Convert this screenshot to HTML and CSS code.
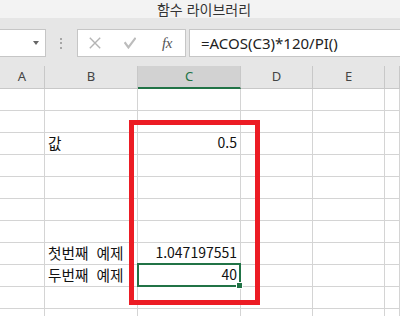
FILE: index.html
```html
<!DOCTYPE html>
<html lang="ko">
<head>
<meta charset="utf-8">
<title>함수 라이브러리</title>
<link rel="stylesheet" href="styles.css">
</head>
<body>
<div class="app">
  <div class="title">함수 라이브러리</div>
  <div class="fbar">
    <div class="namebox"><span class="caret"></span></div>
    <div class="grip"><i></i><i></i><i></i></div>
    <div class="fbtns">
      <svg class="ico-x" width="12" height="12" viewBox="0 0 12 12"><path d="M0.8 0.8 L11.2 11.2 M11.2 0.8 L0.8 11.2" stroke="#b4b4b4" stroke-width="1.4" fill="none"/></svg>
      <svg class="ico-ok" width="12" height="12" viewBox="0 0 12 12"><path d="M0.6 5.2 L4.4 10.4 L11.6 0.8" stroke="#bcbcbc" stroke-width="2.2" fill="none" stroke-linejoin="miter"/></svg>
      <span class="fx">fx</span>
    </div>
    <div class="formula">=ACOS(C3)*120/PI()</div>
  </div>
  <div class="sheet">
    <div class="hd">A</div><div class="hd">B</div><div class="hd hd-sel">C</div><div class="hd">D</div><div class="hd">E</div><div class="hd"></div>

    <div class="c"></div><div class="c"></div><div class="c"></div><div class="c"></div><div class="c"></div><div class="c"></div>
    <div class="c"></div><div class="c"></div><div class="c"></div><div class="c"></div><div class="c"></div><div class="c"></div>
    <div class="c"></div><div class="c txt">값</div><div class="c num">0.5</div><div class="c"></div><div class="c"></div><div class="c"></div>
    <div class="c"></div><div class="c"></div><div class="c"></div><div class="c"></div><div class="c"></div><div class="c"></div>
    <div class="c"></div><div class="c"></div><div class="c"></div><div class="c"></div><div class="c"></div><div class="c"></div>
    <div class="c"></div><div class="c"></div><div class="c"></div><div class="c"></div><div class="c"></div><div class="c"></div>
    <div class="c"></div><div class="c"></div><div class="c"></div><div class="c"></div><div class="c"></div><div class="c"></div>
    <div class="c"></div><div class="c txt">첫번째 예제</div><div class="c num">1.047197551</div><div class="c"></div><div class="c"></div><div class="c"></div>
    <div class="c"></div><div class="c txt">두번째 예제</div><div class="c num active">40<span class="sel"><span class="handle"></span></span></div><div class="c"></div><div class="c"></div><div class="c"></div>
    <div class="c"></div><div class="c"></div><div class="c"></div><div class="c"></div><div class="c"></div><div class="c"></div>
    <div class="c"></div><div class="c"></div><div class="c"></div><div class="c"></div><div class="c"></div><div class="c"></div>
  </div>
  <div class="annot"></div>
</div>
</body>
</html>
```
FILE: styles.css
```css
html, body {
  margin: 0;
  padding: 0;
}
body {
  width: 400px;
  height: 316px;
  overflow: hidden;
  background: #ffffff;
}
.app {
  position: relative;
  width: 400px;
  height: 316px;
  overflow: hidden;
  font-family: "Noto Sans CJK KR", "Noto Sans", sans-serif;
}
.title {
  height: 18px;
  background: #f3f3f3;
  color: #333333;
  font-size: 14px;
  line-height: 18px;
  text-align: center;
  padding-left: 8px;
  box-sizing: border-box;
}
.fbar {
  height: 48px;
  background: #e6e6e6;
  box-sizing: border-box;
  padding-top: 11px;
  display: flex;
  align-items: flex-start;
}
.namebox {
  width: 46px;
  height: 28px;
  box-sizing: border-box;
  background: #ffffff;
  border: 1px solid #c6c6c6;
  border-left: none;
  display: flex;
  align-items: center;
  justify-content: flex-end;
  padding-right: 6px;
}
.caret {
  width: 0;
  height: 0;
  border-left: 3.5px solid transparent;
  border-right: 3.5px solid transparent;
  border-top: 4px solid #666666;
}
.grip {
  margin-left: 14px;
  height: 28px;
  display: flex;
  flex-direction: column;
  justify-content: center;
  gap: 2.5px;
}
.grip i {
  display: block;
  width: 2px;
  height: 2px;
  background: #a6a6a6;
}
.fbtns {
  margin-left: 15px;
  width: 109px;
  height: 28px;
  box-sizing: border-box;
  background: #ffffff;
  border: 1px solid #c6c6c6;
  display: flex;
  align-items: center;
}
.ico-x {
  margin-left: 11px;
  display: block;
}
.ico-ok {
  margin-left: 23px;
  display: block;
}
.fx {
  margin-left: 26px;
  font-family: "Liberation Serif", serif;
  font-style: italic;
  font-size: 15px;
  color: #555555;
  letter-spacing: -0.5px;
  line-height: 16px;
}
.formula {
  margin-left: 3px;
  flex: 1;
  height: 28px;
  box-sizing: border-box;
  background: #ffffff;
  border: 1px solid #c6c6c6;
  border-right: none;
  padding-left: 11px;
  font-family: "Noto Sans", sans-serif;
  font-size: 15px;
  line-height: 26px;
  color: #222222;
  white-space: nowrap;
}
.sheet {
  display: grid;
  grid-template-columns: 45px 93px 103px 72px 72px 1fr;
  grid-template-rows: 23px;
  grid-auto-rows: 22px;
}
.hd {
  grid-row: 1;
  height: 23px;
  box-sizing: border-box;
  background: #e6e6e6;
  border-right: 1px solid #c8c8c8;
  border-bottom: 1px solid #c8c8c8;
  font-family: "Noto Sans", sans-serif;
  font-size: 13px;
  line-height: 20px;
  color: #444444;
  text-align: center;
}
.hd-sel {
  background: #d2d2d2;
  border-bottom: 2px solid #217346;
  color: #217346;
}
.c {
  box-sizing: border-box;
  height: 22px;
  border-right: 1px solid #d4d4d4;
  border-bottom: 1px solid #d4d4d4;
  background: #ffffff;
  font-size: 14.67px;
  line-height: 19px;
  color: #111111;
  padding: 0 3px;
  white-space: nowrap;
}
.txt {
  text-align: left;
  word-spacing: 4px;
}
.num {
  text-align: right;
  font-size: 14px;
}
.active {
  position: relative;
}
.sel {
  position: absolute;
  left: -1px;
  top: -2px;
  width: 104px;
  height: 24px;
  box-sizing: border-box;
  border: 2px solid #217346;
}
.handle {
  position: absolute;
  right: -3px;
  bottom: -3px;
  width: 5px;
  height: 5px;
  background: #217346;
  box-shadow: 0 0 0 1px #ffffff;
}
.annot {
  position: absolute;
  left: 129px;
  top: 120px;
  width: 131px;
  height: 185px;
  box-sizing: border-box;
  border: 5px solid #ec1c24;
}
```
